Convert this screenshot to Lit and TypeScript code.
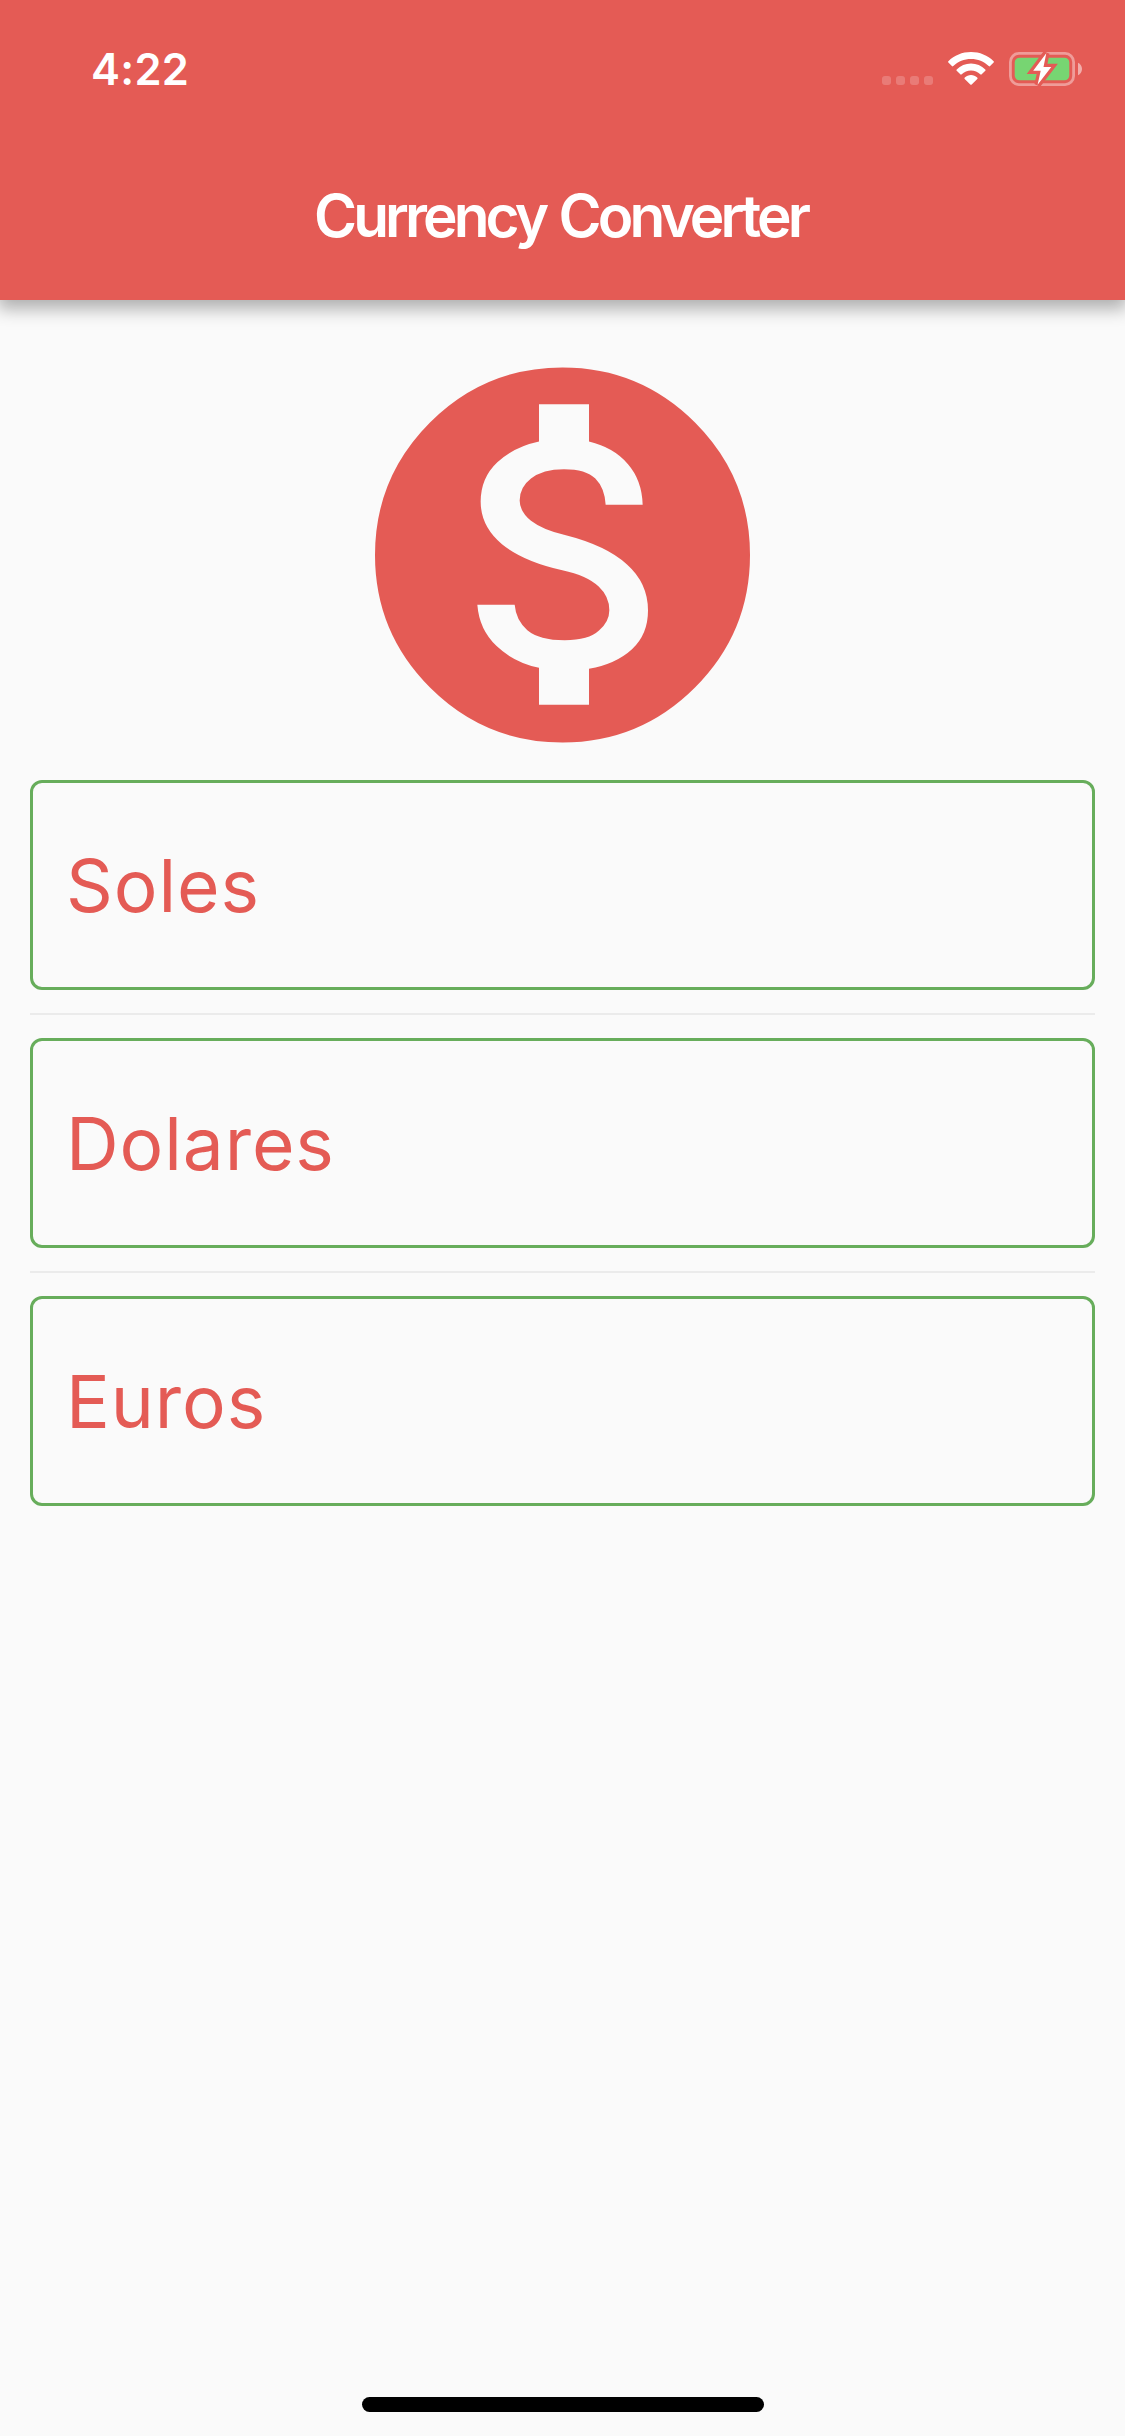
import { LitElement, html, css } from "lit";
import { customElement, property } from "lit/decorators.js";

@customElement("status-bar")
class StatusBar extends LitElement {
  static styles = css`
    :host {
      display: flex;
      justify-content: space-between;
      align-items: flex-start;
      box-sizing: border-box;
      height: 132px;
      padding: 0 43px 0 91px;
      color: #fff;
    }
    .time {
      margin-top: 43px;
      font-size: 43.5px;
      line-height: 52px;
      font-weight: 600;
      letter-spacing: 0.3px;
    }
    .icons {
      display: flex;
      align-items: flex-start;
      padding-top: 52px;
    }
    .icons svg {
      display: block;
    }
    .wifi {
      margin: 0 15px 0 15px;
    }
  `;

  render() {
    return html`
      <div class="time">4:22</div>
      <div class="icons">
        <svg width="51" height="34" viewBox="0 0 51 34" fill="#fff" fill-opacity=".2">
          <rect x="0" y="24" width="9" height="9" rx="3" />
          <rect x="14" y="24" width="9" height="9" rx="3" />
          <rect x="28" y="24" width="9" height="9" rx="3" />
          <rect x="42" y="24" width="9" height="9" rx="3" />
        </svg>
        <svg class="wifi" width="46" height="34" viewBox="0 0 46 34" fill="#fff">
          <path d="M.4 9.2C6.3 3.300 14.300 0 23 0s16.700 3.300 22.600 9.200q.7.7 0 1.400l-3.500 3.500q-.7.700-1.400 0C36 9.600 29.800 7.100 23 7.100S10 9.600 5.300 14.100q-.7.700-1.400 0L.4 10.600q-.7-.7 0-1.400z" />
          <path d="M8.700 17.400C12.500 13.700 17.500 11.400 23 11.400s10.500 2.300 14.300 6q.7.700 0 1.400l-3.600 3.500q-.7.700-1.400 0C29.800 19.900 26.600 18.400 23 18.400s-6.800 1.500-9.300 3.900q-.7.700-1.400 0l-3.600-3.500q-.7-.7 0-1.400z" />
          <path d="M16.800 25.500C18.500 24 20.600 23 23 23s4.500 1 6.200 2.500q.8.700.1 1.400l-5.600 5.600q-.7.700-1.400 0l-5.600-5.600q-.7-.7.100-1.400z" />
        </svg>
        <svg width="73" height="34" viewBox="0 0 73 34">
          <rect x="1.400" y="1.400" width="63.200" height="31.200" rx="8.500" fill="none" stroke="#fff" stroke-opacity=".4" stroke-width="2.800" />
          <path d="M69 10.700c2.400 1 4 3.400 4 6.300s-1.600 5.300-4 6.300z" fill="#fff" fill-opacity=".5" />
          <rect x="5.700" y="5.700" width="54.600" height="22.600" rx="4.800" fill="#77d572" />
          <path d="M37.300 1.200 24.200 18.700H31.700L28.600 32.800 42.300 15H34.500z" fill="#e45b55" stroke="#e45b55" stroke-width="6.500" />
          <path d="M37.300 1.200 24.200 18.700H31.700L28.600 32.800 42.300 15H34.500z" fill="#fff" />
        </svg>
      </div>
    `;
  }
}

@customElement("currency-item")
class CurrencyItem extends LitElement {
  @property() label = "";

  static styles = css`
    :host {
      display: flex;
      align-items: center;
      box-sizing: border-box;
      height: 210px;
      padding: 2px 33px 0;
      border: 3px solid #67ad5b;
      border-radius: 12px;
      color: #e45b55;
      font-size: 73px;
      line-height: 88px;
      letter-spacing: 0.9px;
    }
  `;

  render() {
    return html`<span>${this.label}</span>`;
  }
}

@customElement("app-root")
class AppRoot extends LitElement {
  private currencies = ["Soles", "Dolares", "Euros"];

  static styles = css`
    :host {
      display: flex;
      flex-direction: column;
      width: 1125px;
      height: 2436px;
      overflow: hidden;
      background: #fafafa;
      font-family: Inter, "Liberation Sans", sans-serif;
    }
    .header {
      flex: none;
      height: 300px;
      background: #e45b55;
      box-shadow: 0 7px 16px 2px rgba(0, 0, 0, 0.3);
    }
    .title {
      margin: 0;
      height: 168px;
      line-height: 168px;
      text-align: center;
      color: #fff;
      font-size: 58.5px;
      font-weight: 560;
      letter-spacing: -3.9px;
      word-spacing: 2.5px;
      text-indent: -4px;
    }
    .content {
      flex: 1;
      display: flex;
      flex-direction: column;
      padding: 67px 30px 0;
    }
    .logo {
      display: block;
      width: 375px;
      height: 375px;
      margin: 0 auto 38px;
      overflow: visible;
    }
    .divider {
      height: 2px;
      margin: 23px 0;
      background: #ebebeb;
    }
    .home {
      flex: none;
      align-self: center;
      width: 402px;
      height: 15px;
      margin: 0 0 24px 1px;
      border-radius: 8px;
      background: #000;
    }
  `;

  render() {
    return html`
      <header class="header">
        <status-bar></status-bar>
        <h1 class="title">Currency Converter</h1>
      </header>
      <main class="content">
        <svg class="logo" viewBox="45 51.500 1125 1125">
          <path
            fill="#e45b55"
            fill-rule="evenodd"
            d="M607.5 53Q840 53 1005 218Q1170 383 1170 615.500Q1170 848 1005 1013Q840 1178 607.500 1178Q375 1178 210 1013Q45 848 45 615.500Q45 383 210 218Q375 53 607.500 53Z
            M537 163V275Q462 291 412 337Q362 384 362 455Q362 530 426 583Q490 635 607 661Q682 677 716 710Q748 740 748 781Q748 815 717 842Q686 871 614 871Q538 871 502 841Q468 812 464 765H352Q358 840 409 888Q460 937 537 954V1065H687V957Q768 942 816 898Q864 854 864 782Q864 700 801 644Q739 587 612 555Q548 540 513 513Q479 485 479 452Q479 412 513 386Q548 358 612 358Q678 358 706 386Q734 414 737 465H848Q846 391 804 343Q762 293 687 275V163Z"
          />
        </svg>
        ${this.currencies.map(
          (name, i) => html`
            ${i ? html`<div class="divider"></div>` : ""}
            <currency-item label=${name}></currency-item>
          `
        )}
      </main>
      <div class="home"></div>
    `;
  }
}
